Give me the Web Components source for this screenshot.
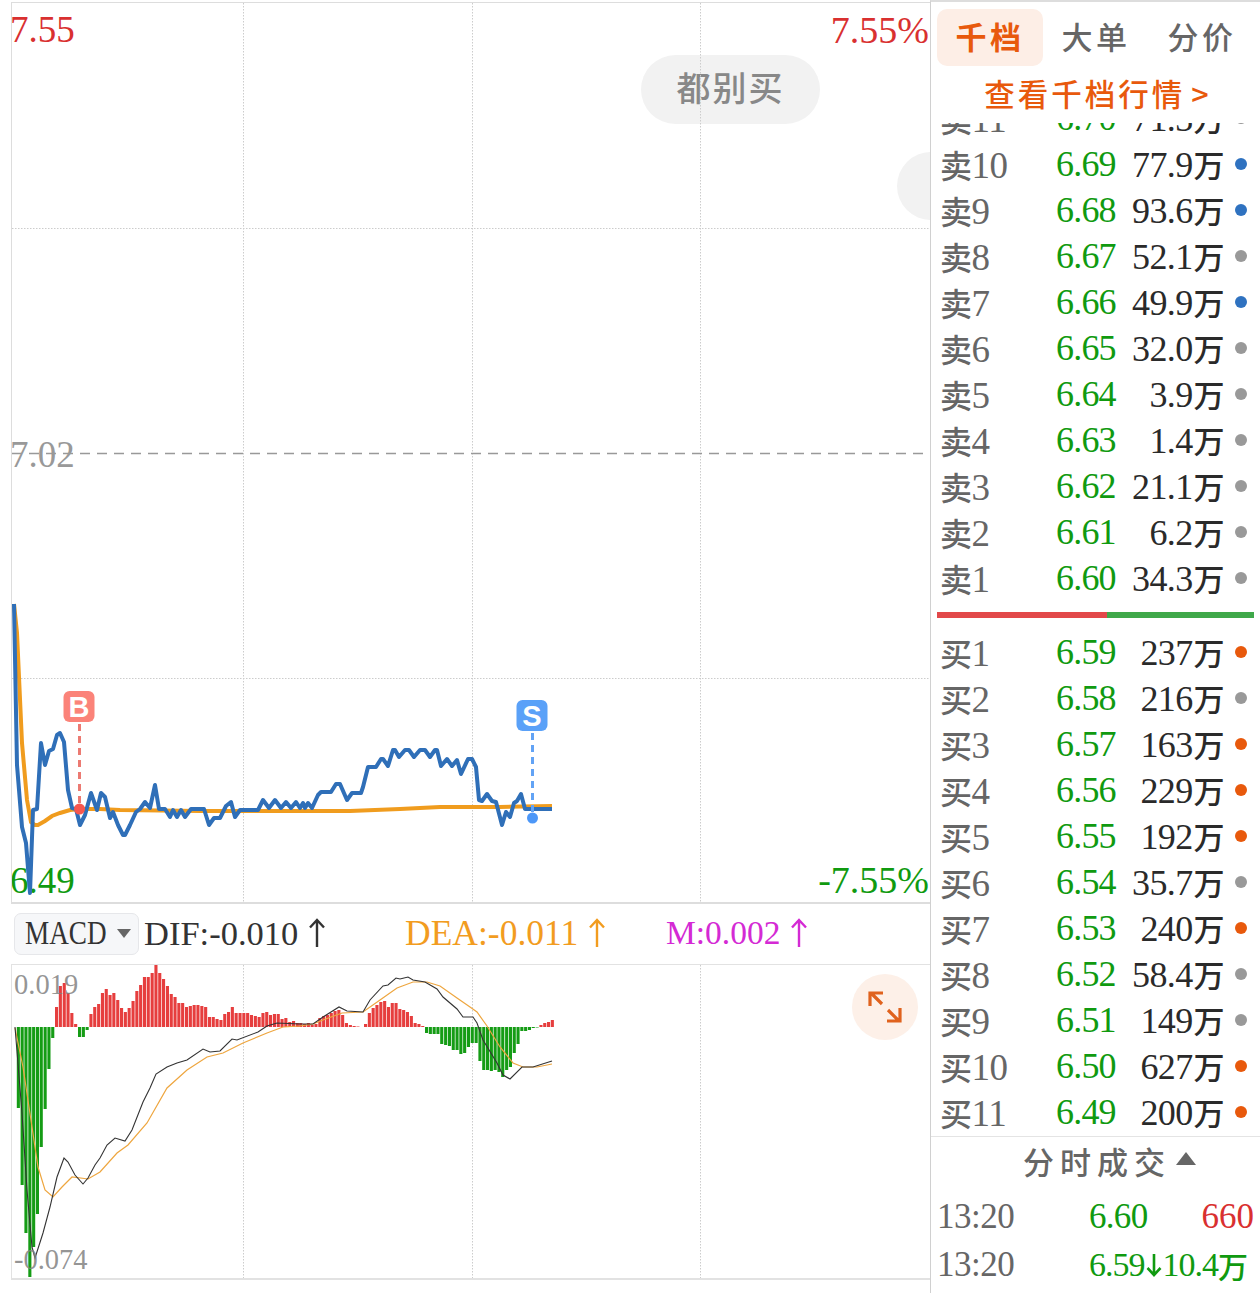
<!DOCTYPE html>
<html lang="zh">
<head>
<meta charset="utf-8">
<title>千档</title>
<style>
	html, body { margin: 0; background: #fff; }
	body { font: 34px "Liberation Serif", "Noto Sans CJK SC", serif; overflow: hidden; }
</style>
</head>
<body>
<stock-screen>
	<chart-pane slot="chart"></chart-pane>
	<depth-panel slot="depth"></depth-panel>
</stock-screen>

<script>
const SERIF = `"Liberation Serif", "Noto Sans CJK SC", serif`;
const toPoints = list => list.map(p => p.join(",")).join(" ");

const PRICE = [[14,604],[17,765],[22,827],[26,843],[30,893],[33,810],[37,809],[41,743],[45,765],[49,751],[53,749],[57,735],[60,733],[64,742],[68,790],[72,808],[76,809],[80,825],[85,815],[91,793],[97,810],[101,793],[105,797],[110,818],[113,812],[118,825],[123,835],[125,835],[130,825],[136,812],[140,809],[145,802],[150,808],[155,785],[159,809],[165,809],[170,817],[173,810],[177,817],[181,810],[185,817],[191,809],[204,809],[209,825],[214,818],[220,818],[226,806],[231,802],[235,817],[240,810],[258,810],[263,800],[269,808],[275,800],[281,808],[286,802],[291,808],[296,802],[300,808],[303,803],[305,808],[308,803],[312,808],[318,795],[321,792],[331,792],[336,784],[340,784],[347,800],[352,793],[361,793],[363,787],[368,767],[376,767],[381,759],[383,759],[388,766],[393,750],[395,750],[399,757],[405,750],[409,750],[414,757],[420,750],[425,750],[430,757],[435,750],[437,750],[441,766],[447,759],[452,766],[457,760],[461,774],[468,759],[472,759],[476,767],[479,800],[482,801],[487,794],[492,801],[496,802],[502,825],[506,812],[510,817],[514,803],[517,801],[521,794],[525,809],[552,809]];
const AVERAGE = [[14,604],[17,633],[22,743],[27,800],[31,822],[35,825],[38,825],[45,821],[52,816],[60,813],[70,810],[80,809],[100,809],[120,810],[200,811],[350,811],[400,809],[440,807],[500,807],[552,806]];
const DIF = [[15,1027],[22,1113],[27,1190],[32,1247],[35,1258],[43,1233],[50,1207],[57,1177],[64,1158],[68,1162],[75,1175],[83,1184],[88,1178],[95,1165],[100,1158],[107,1145],[115,1138],[125,1141],[132,1130],[143,1102],[150,1088],[156,1074],[167,1067],[177,1063],[187,1060],[203,1049],[210,1052],[220,1051],[232,1039],[237,1040],[258,1032],[267,1026],[277,1023],[300,1024],[313,1024],[323,1017],[339,1007],[347,1011],[363,1012],[370,1000],[383,986],[388,985],[396,978],[400,979],[408,977],[413,980],[425,982],[437,989],[443,997],[457,1009],[463,1017],[473,1017],[477,1023],[483,1040],[497,1063],[503,1075],[510,1079],[522,1067],[533,1067],[552,1061]];
const DEA = [[15,1028],[23,1067],[32,1127],[38,1167],[45,1190],[53,1197],[62,1187],[72,1177],[88,1179],[100,1172],[117,1153],[128,1145],[147,1123],[167,1088],[187,1070],[207,1057],[223,1053],[243,1043],[267,1033],[283,1027],[300,1026],[313,1024],[323,1020],[342,1013],[363,1012],[380,1000],[397,988],[413,982],[427,982],[440,986],[457,998],[470,1007],[477,1012],[487,1026],[500,1047],[513,1063],[523,1067],[537,1067],[552,1064]];
const BARS_A = [1108,1185,1233,1277,1247,1214,1147,1109,1069,1038,1007,986,983,993,1013,1024,1037,1037,1030,1014,1007,1004,993,989,995,993,1000,1008,1012,1008,1001,991,985,977,977,973,964,973,979,986,994,997,1003,1003,1007,1006,1005,1005,1006,1007,1017,1017,1019,1020,1014,1012,1007,1013,1013,1013,1013,1015,1016,1017,1013,1012,1015,1014,1014,1019,1018,1022,1021,1023];
const BARS_B = [1023,1024,1023,1025,1024,1018,1016,1015,1013,1011,1010,1015,1023,1025,1026,1026.5,1027,1024,1013,1008,1005,1002,1001,1007,1003,1003,1009,1010,1012,1016,1023,1024,1026,1033,1034,1034,1034,1044,1045,1046,1050,1050,1054,1053,1047,1043,1043,1061,1070,1070,1071,1070,1072,1077,1070,1067,1053,1044,1031,1031,1030,1028,1027.5,1025,1023,1022,1020];

function barRects(values, from, to) {
	const step = (to - from) / (values.length - 1);
	return values.map((y, i) => {
		const x = (from + i * step - 1.5).toFixed(1);
		const top = Math.min(y, 1027);
		const h = Math.abs(y - 1027);
		return `<rect x="${x}" y="${top}" width="3.1" height="${h}" fill="${y > 1027 ? "#159c15" : "#e63e3e"}"/>`;
	}).join("");
}

const gridLines = (top, bottom) => [243, 472, 700].map(x =>
	`<line x1="${x}.5" x2="${x}.5" y1="${top}" y2="${bottom}" stroke="#ccc" stroke-dasharray="1.5 1.5"/>`).join("");

class PriceChart extends HTMLElement {
	constructor() {
		super();
		this.attachShadow({mode: "open"}).innerHTML = `
			<style>
				:host { display: block; position: relative; height: 899px; overflow: hidden;
					border: solid #ddd; border-width: 1px 0 2px 1px; font: 37px ${SERIF}; }
				svg { position: absolute; left: 0; top: 0; }
				span { position: absolute; line-height: 40px; }
				.red { color: #d93030; }
				.green { color: #109a10; }
				.pill { background: #f2f2f2; border-radius: 35px; height: 69px; color: #888; display: flex;
					align-items: center; justify-content: center; font-size: 34px; font-weight: 500; letter-spacing: 2px; }
			</style>
			<span class="red" style="left:-2px;top:7px">7.55</span>
			<span class="red" style="right:1px;top:7px;font-size:38px">7.55%</span>
			<span style="left:-2px;top:432px;color:#999">7.02</span>
			<span class="green" style="left:-2px;top:858px">6.49</span>
			<span class="green" style="right:1px;top:857px;font-size:38px">-7.55%</span>
			<span class="pill" style="left:629px;top:52px;width:179px">都别买</span>
			<span class="pill" style="left:885px;top:149px;width:68px;height:68px"></span>
			<svg width="919" height="899" viewBox="12 3 919 899">
				${gridLines(3, 902)}
				<line x1="12" x2="930" y1="228.5" y2="228.5" stroke="#ccc" stroke-dasharray="1.5 1.5"/>
				<line x1="12" x2="930" y1="678.5" y2="678.5" stroke="#ccc" stroke-dasharray="1.5 1.5"/>
				<line x1="12" x2="930" y1="453.5" y2="453.5" stroke="#999" stroke-width="1.5" stroke-dasharray="10 7"/>
				<polyline points="${toPoints(AVERAGE)}" fill="none" stroke="#f09c1e" stroke-width="4"/>
				<polyline points="${toPoints(PRICE)}" fill="none" stroke="#2f6fb8" stroke-width="4" stroke-linejoin="round"/>
				<line x1="79.5" x2="79.5" y1="724" y2="805" stroke="#ec7a72" stroke-width="3" stroke-dasharray="7 5"/>
				<circle cx="79.5" cy="809" r="5.5" fill="#f8574f"/>
				<rect x="63.5" y="691" width="31" height="31" rx="6" fill="#fb8379"/>
				<text x="79" y="717" text-anchor="middle" font-family="Liberation Sans" font-weight="700" font-size="29" fill="#fff">B</text>
				<line x1="532.5" x2="532.5" y1="733" y2="812" stroke="#62a3f5" stroke-width="3" stroke-dasharray="7 5"/>
				<circle cx="532.5" cy="818" r="5.5" fill="#4c97f8"/>
				<rect x="516.5" y="700" width="31" height="31" rx="6" fill="#5aa1f8"/>
				<text x="532" y="726" text-anchor="middle" font-family="Liberation Sans" font-weight="700" font-size="29" fill="#fff">S</text>
			</svg>`;
	}
}

class MacdBar extends HTMLElement {
	constructor() {
		super();
		this.attachShadow({mode: "open"}).innerHTML = `
			<style>
				:host { display: flex; align-items: center; height: 60px; padding-left: 3px; font: 34.5px/40px ${SERIF}; color: #333; }
				.select { box-sizing: border-box; width: 125px; height: 42px; display: flex; align-items: center;
					padding-left: 10px; background: #f6f7f9; border: 1px solid #e6e7ea; border-radius: 7px; font-size: 34px; }
				.select span { display: inline-block; width: 92px; transform: scaleX(.8); transform-origin: 0 50%; white-space: nowrap; margin-top: -2px; }
				.select i { border: solid transparent; border-width: 9px 7px 0; border-top-color: #666; margin-top: -2px; }
				.item { display: flex; align-items: center; gap: 10px; margin-top: -2px; }
				svg { display: block; }
			</style>
			<div class="select"><span>MACD</span><i></i></div>
			<div class="item" style="margin-left:5px;width:261px">DIF:-0.010 ${MacdBar.arrow("#333")}</div>
			<div class="item" style="width:261px;color:#f29c1f;font-size:35.5px">DEA:-0.011 ${MacdBar.arrow("#f29c1f")}</div>
			<div class="item" style="color:#d42ad4;font-size:33.5px">M:0.002 ${MacdBar.arrow("#d42ad4")}</div>`;
	}

	static arrow(color) {
		return `<svg width="18" height="30" viewBox="0 0 18 30" fill="none" stroke="${color}" stroke-width="2.4"><path d="M9 29V2M2 9.5L9 2l7 7.5"/></svg>`;
	}
}

class MacdChart extends HTMLElement {
	constructor() {
		super();
		this.attachShadow({mode: "open"}).innerHTML = `
			<style>
				:host { display: block; position: relative; height: 313px; overflow: hidden;
					border: solid #e2e2e2; border-width: 1px 0 2px 1px; font: 28.5px ${SERIF}; }
				svg { position: absolute; left: 0; top: 0; }
				span { position: absolute; left: 2px; color: rgba(130, 130, 130, 0.85); line-height: 32px; }
				button { position: absolute; left: 840px; top: 9px; width: 66px; height: 66px; padding: 0; border: 0;
					border-radius: 50%; background: #fdf0e8; display: flex; align-items: center; justify-content: center; }
			</style>
			<svg width="919" height="313" viewBox="12 965 919 313">
				${gridLines(965, 1278)}
				${barRects(BARS_A, 18.3, 297.3)}${barRects(BARS_B, 300.7, 552.3)}
				<polyline points="${toPoints(DEA)}" fill="none" stroke="#eea63f" stroke-width="1.2"/>
				<polyline points="${toPoints(DIF)}" fill="none" stroke="#333" stroke-width="1.1"/>
			</svg>
			<span style="top:4px">0.019</span>
			<span style="top:279px">-0.074</span>
			<button aria-label="expand">
				<svg style="position:static" width="34" height="34" viewBox="0 0 34 34" fill="none" stroke="#e0621d" stroke-width="3.2">
					<path d="M2 16V3h13M3 3l11 11M32 18v13H19M31 31L20 20"/>
				</svg>
			</button>`;
	}
}

class ChartPane extends HTMLElement {
	constructor() {
		super();
		this.attachShadow({mode: "open"}).innerHTML = `
			<style>:host { display: block; width: 919px; padding: 2px 0 0 11px; }</style>
			<price-chart></price-chart>
			<macd-bar></macd-bar>
			<macd-chart></macd-chart>`;
	}
}

class QuoteRow extends HTMLElement {
	constructor() {
		super();
		const [name, price, volume, dot] = this.getAttribute("data").split(" ");
		const colors = {b: "#2f72c0", g: "#999", o: "#e8590c"};
		this.attachShadow({mode: "open"}).innerHTML = `
			<style>
				:host { display: grid; grid-template-columns: 116px 64px 104px 12px; align-items: center;
					height: 46px; padding-left: 9px; font: 36px/44px ${SERIF}; }
				.name { color: #666; margin-top: -2px; font-size: 37px; letter-spacing: -0.5px; }
				.name b { font: 500 32px "Noto Sans CJK SC", sans-serif; }
				.price { color: #109a10; letter-spacing: -0.8px; margin-top: -2px; }
				.volume { color: #2a2a2a; text-align: right; letter-spacing: -0.6px; white-space: nowrap; margin-top: -2px; }
				.volume b { font: 500 31px "Noto Sans CJK SC", sans-serif; margin-left: 1px; }
				i { width: 12px; height: 12px; border-radius: 50%; margin-left: 11px; margin-top: -3px; background: ${colors[dot]}; }
			</style>
			<div class="name"><b>${name[0]}</b>${name.slice(1)}</div>
			<div class="price">${price}</div>
			<div class="volume">${volume}<b>万</b></div>
			<i></i>`;
	}
}

const SELL = ["卖11 6.70 71.3 g", "卖10 6.69 77.9 b", "卖9 6.68 93.6 b", "卖8 6.67 52.1 g", "卖7 6.66 49.9 b", "卖6 6.65 32.0 g", "卖5 6.64 3.9 g", "卖4 6.63 1.4 g", "卖3 6.62 21.1 g", "卖2 6.61 6.2 g", "卖1 6.60 34.3 g"];
const BUY = ["买1 6.59 237 o", "买2 6.58 216 g", "买3 6.57 163 o", "买4 6.56 229 o", "买5 6.55 192 o", "买6 6.54 35.7 g", "买7 6.53 240 o", "买8 6.52 58.4 g", "买9 6.51 149 g", "买10 6.50 627 o", "买11 6.49 200 o"];
const rows = list => list.map(d => `<quote-row data="${d}"></quote-row>`).join("");

class DepthPanel extends HTMLElement {
	constructor() {
		super();
		this.attachShadow({mode: "open"}).innerHTML = `
			<style>
				:host { display: block; width: 329px; border-left: 1px solid #d0d0d0; border-top: 2px solid #ddd; box-sizing: content-box;
					height: 1291px; font: 35px ${SERIF}; overflow: hidden; }
				.tabs { display: grid; grid-template-columns: 106px 106px 106px; padding: 7px 0 0 6px; height: 57px;
					font: 500 31px/1 "Noto Sans CJK SC", sans-serif; letter-spacing: 3.5px; color: #666; }
				.tabs div { display: flex; align-items: center; justify-content: center; border-radius: 10px; padding-bottom: 4px; box-sizing: border-box; }
				.tabs .on { background: #fdeee6; color: #e8590c; font-weight: 700; }
				.link { height: 57px; display: flex; align-items: center; justify-content: center; gap: 6px; padding: 0 0 2px 5px;
					box-sizing: border-box; font: 500 30.5px/1 "Noto Sans CJK SC", sans-serif; letter-spacing: 3px; color: #e8590c; }
				.sell { height: 479px; overflow: hidden; }
				.sell > div { margin-top: -27px; }
				.split { display: flex; height: 6px; margin: 10px 6px 12px; }
				.split div:first-child { width: 170px; background: #e2484a; }
				.split div:last-child { flex: 1; background: #3fa84a; }
				.head { box-sizing: border-box; border-top: 1px solid #e4e4e4; height: 53px; display: flex; align-items: center;
					gap: 5px; padding: 0 0 5px 92px; font: 500 31px/1 "Noto Sans CJK SC", sans-serif; letter-spacing: 6px; color: #666; }
				.head i { border: solid transparent; border-width: 0 10px 13px; border-bottom-color: #666; margin-top: -4px; }
				.trade { display: grid; grid-template-columns: 152px 1fr auto; height: 48px; align-items: center; padding: 0 6px 0 6px; }
				.time { color: #666; letter-spacing: -0.5px; }
				.green { color: #109a10; letter-spacing: -0.7px; }
				.red { color: #d93030; }
				.small { display: flex; align-items: center; font-size: 34px; letter-spacing: -1px; white-space: nowrap; }
				.small b { font: 500 30px/1 "Noto Sans CJK SC", sans-serif; }
				.small svg { margin: 0 1px; }
			</style>
			<div class="tabs"><div class="on">千档</div><div>大单</div><div>分价</div></div>
			<div class="link"><span>查看千档行情</span><span>&gt;</span></div>
			<div class="sell"><div>${rows(SELL)}</div></div>
			<div class="split"><div></div><div></div></div>
			${rows(BUY)}
			<div class="head"><span>分时成交</span><i></i></div>
			<div class="trade" style="margin-top:4px"><span class="time">13:20</span><span class="green">6.60</span><span class="red">660</span></div>
			<div class="trade"><span class="time">13:20</span><span class="green small" style="grid-column:2 / 4">6.59<svg width="16" height="24" viewBox="0 0 16 24" fill="none" stroke="#109a10" stroke-width="2.6"><path d="M8 1v21M1.500 15L8 22l6.500-7"/></svg>10.4<b>万</b></span></div>`;
	}
}

class StockScreen extends HTMLElement {
	constructor() {
		super();
		this.attachShadow({mode: "open"}).innerHTML = `
			<style>:host { display: flex; width: 1260px; height: 1293px; overflow: hidden; background: #fff; }</style>
			<slot name="chart"></slot>
			<slot name="depth"></slot>`;
	}
}

customElements.define("price-chart", PriceChart);
customElements.define("macd-bar", MacdBar);
customElements.define("macd-chart", MacdChart);
customElements.define("chart-pane", ChartPane);
customElements.define("quote-row", QuoteRow);
customElements.define("depth-panel", DepthPanel);
customElements.define("stock-screen", StockScreen);
</script>
</body>
</html>
